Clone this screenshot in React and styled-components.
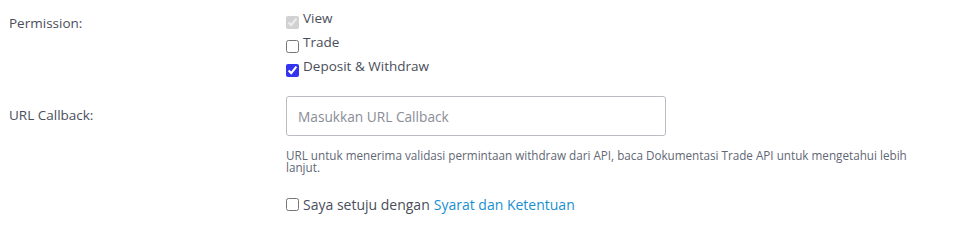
import React from 'react';
import styled, { createGlobalStyle } from 'styled-components';

const Global = createGlobalStyle`
  html, body { margin: 0; padding: 0; background: #fff; }
  body { font-family: "Open Sans", "Noto Sans", sans-serif; color: #4a4e5a; }
  * { box-sizing: border-box; }
`;

const Form = styled.form`
  display: flex;
  flex-direction: column;
  padding: 6px 15px 0 9px;
`;

const Row = styled.div`
  display: grid;
  grid-template-columns: 277px 1fr;
  margin-top: ${p => p.$mt || 0}px;
`;

const Label = styled.div`
  font-size: 13.5px;
  line-height: 24px;
  padding-top: ${p => p.$pt || 0}px;
`;

const Field = styled.div`
  display: flex;
  flex-direction: column;
`;

const Option = styled.label`
  display: flex;
  align-items: flex-start;
  gap: 4px;
  font-size: ${p => p.$size || 13.5}px;
  line-height: 24px;
  color: #4a4e5a;
`;

const Check = styled.input.attrs({ type: 'checkbox' })`
  width: 13px;
  height: 13px;
  margin: ${p => p.$top || 10}px 0 0 0;
  accent-color: #3434f0;
  flex: none;
`;

const Input = styled.input`
  width: 380px;
  height: 40px;
  border: 1px solid #b9bcc2;
  border-radius: 3px;
  padding: 0 11px;
  font-family: inherit;
  font-size: 13.7px;
  color: #4a4e5a;
  outline: none;
  caret-color: #222;
  &::placeholder { color: #8a8d96; }
`;

const Help = styled.p`
  margin: 13px 0 0 0;
  font-size: 11.7px;
  line-height: 12px;
  color: #626774;
  max-width: 640px;
`;

const Agree = styled(Option)`
  margin-top: 20px;
`;

const Link = styled.a`
  color: #1a8fd0;
  text-decoration: none;
  margin-left: 4px;
`;

export default function App() {
  return (
    <>
      <Global />
      <Form onSubmit={e => e.preventDefault()}>
        <Row>
          <Label $pt={5}>Permission:</Label>
          <Field>
            <Option><Check defaultChecked disabled />View</Option>
            <Option><Check />Trade</Option>
            <Option><Check defaultChecked />Deposit &amp; Withdraw</Option>
          </Field>
        </Row>
        <Row $mt={18}>
          <Label $pt={7}>URL Callback:</Label>
          <Field>
            <Input type="text" placeholder="Masukkan URL Callback" autoFocus />
          </Field>
        </Row>
        <Row>
          <div />
          <Field>
            <Help>
              URL untuk menerima validasi permintaan withdraw dari API, baca Dokumentasi Trade API untuk mengetahui lebih lanjut.
            </Help>
            <Agree $size={14}>
              <Check $top={5} />
              <span>Saya setuju dengan<Link href="#">Syarat dan Ketentuan</Link></span>
            </Agree>
          </Field>
        </Row>
      </Form>
    </>
  );
}
